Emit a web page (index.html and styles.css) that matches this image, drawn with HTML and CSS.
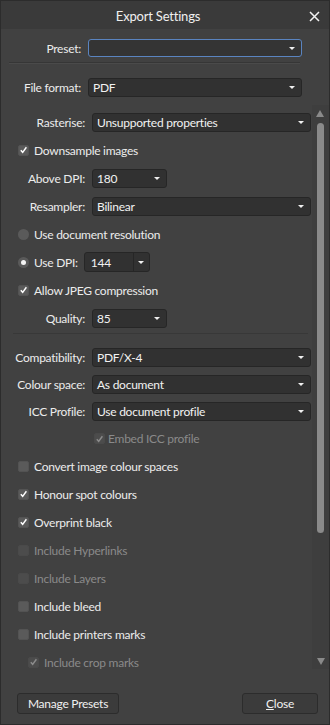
FILE: index.html
```html
<!DOCTYPE html>
<html>
<head>
<meta charset="utf-8">
<link rel="stylesheet" href="styles.css">
</head>
<body>
<div class="window">
  <div class="titlebar">
    <span class="title">Export Settings</span>
    <svg class="close-x" width="11" height="11" viewBox="0 0 11 11"><path d="M1 1L10 10M10 1L1 10" stroke="#f2f2f2" stroke-width="1.5" fill="none"/></svg>
  </div>
  <div class="top">
    <div class="trow preset-row">
      <span class="tlabel">Preset:</span>
      <div class="combo focus"><span class="val"></span><span class="arrow"></span></div>
    </div>
    <div class="tsep"></div>
    <div class="trow format-row">
      <span class="tlabel">File format:</span>
      <div class="combo"><span class="val">PDF</span><span class="arrow"></span></div>
    </div>
  </div>
  <div class="scroll-area">
    <div class="content">
      <div class="row">
        <span class="label">Rasterise:</span>
        <div class="combo wide"><span class="val">Unsupported properties</span><span class="arrow"></span></div>
      </div>
      <div class="row check-row">
        <span class="box checked"><svg width="10" height="10" viewBox="0 0 10 10"><path d="M2 5.2L4.1 7.6L8.2 2" stroke="#fff" stroke-width="1.6" fill="none"/></svg></span>
        <span class="ctext">Downsample images</span>
      </div>
      <div class="row">
        <span class="label">Above DPI:</span>
        <div class="combo small"><span class="val">180</span><span class="arrow"></span></div>
      </div>
      <div class="row">
        <span class="label">Resampler:</span>
        <div class="combo wide"><span class="val">Bilinear</span><span class="arrow"></span></div>
      </div>
      <div class="row check-row">
        <span class="radio"></span>
        <span class="ctext">Use document resolution</span>
      </div>
      <div class="row check-row">
        <span class="radio on"></span>
        <span class="ctext">Use DPI:</span>
        <div class="combo split"><span class="val">144</span><span class="split-btn"><span class="arrow"></span></span></div>
      </div>
      <div class="row check-row">
        <span class="box checked"><svg width="10" height="10" viewBox="0 0 10 10"><path d="M2 5.2L4.1 7.6L8.2 2" stroke="#fff" stroke-width="1.6" fill="none"/></svg></span>
        <span class="ctext">Allow JPEG compression</span>
      </div>
      <div class="row">
        <span class="label">Quality:</span>
        <div class="combo small"><span class="val">85</span><span class="arrow"></span></div>
      </div>
      <div class="sep"></div>
      <div class="row r27">
        <span class="label">Compatibility:</span>
        <div class="combo wide"><span class="val">PDF/X-4</span><span class="arrow"></span></div>
      </div>
      <div class="row r27">
        <span class="label">Colour space:</span>
        <div class="combo wide"><span class="val">As document</span><span class="arrow"></span></div>
      </div>
      <div class="row r27">
        <span class="label">ICC Profile:</span>
        <div class="combo wide"><span class="val">Use document profile</span><span class="arrow"></span></div>
      </div>
      <div class="row r27 check-row embed disabled">
        <span class="box checked"><svg width="10" height="10" viewBox="0 0 10 10"><path d="M2 5.2L4.1 7.6L8.2 2" stroke="#8c8c8c" stroke-width="1.6" fill="none"/></svg></span>
        <span class="ctext">Embed ICC profile</span>
      </div>
      <div class="row check-row">
        <span class="box"></span>
        <span class="ctext">Convert image colour spaces</span>
      </div>
      <div class="row check-row">
        <span class="box checked"><svg width="10" height="10" viewBox="0 0 10 10"><path d="M2 5.2L4.1 7.6L8.2 2" stroke="#fff" stroke-width="1.6" fill="none"/></svg></span>
        <span class="ctext">Honour spot colours</span>
      </div>
      <div class="row check-row">
        <span class="box checked"><svg width="10" height="10" viewBox="0 0 10 10"><path d="M2 5.2L4.1 7.6L8.2 2" stroke="#fff" stroke-width="1.6" fill="none"/></svg></span>
        <span class="ctext">Overprint black</span>
      </div>
      <div class="row check-row disabled">
        <span class="box"></span>
        <span class="ctext">Include Hyperlinks</span>
      </div>
      <div class="row check-row disabled">
        <span class="box"></span>
        <span class="ctext">Include Layers</span>
      </div>
      <div class="row check-row">
        <span class="box"></span>
        <span class="ctext">Include bleed</span>
      </div>
      <div class="row check-row">
        <span class="box"></span>
        <span class="ctext">Include printers marks</span>
      </div>
      <div class="row check-row crop disabled">
        <span class="box checked"><svg width="10" height="10" viewBox="0 0 10 10"><path d="M2 5.2L4.1 7.6L8.2 2" stroke="#8c8c8c" stroke-width="1.6" fill="none"/></svg></span>
        <span class="ctext">Include crop marks</span>
      </div>
    </div>
    <div class="scrollbar">
      <span class="sb-up"></span>
      <span class="sb-thumb"></span>
      <span class="sb-space"></span>
      <span class="sb-down"></span>
    </div>
  </div>
  <div class="footer">
    <button class="btn manage">Manage Presets</button>
    <button class="btn close"><u>C</u>lose</button>
  </div>
</div>
</body>
</html>
```

FILE: styles.css
```css
html, body {
  margin: 0;
  padding: 0;
  background: #414141;
}
body {
  font-family: Lato, "Noto Sans", sans-serif;
  font-size: 12px;
  letter-spacing: -0.25px;
  color: #ececec;
}
.window {
  width: 330px;
  height: 725px;
  box-sizing: border-box;
  border: 1px solid #2c2c2c;
  background: #414141;
  display: flex;
  flex-direction: column;
  overflow: hidden;
}
.titlebar {
  height: 28px;
  flex: none;
  background: #3a3a3a;
  display: flex;
  align-items: center;
  justify-content: center;
  position: relative;
}
.title {
  font-size: 13px;
  letter-spacing: -0.2px;
  color: #f0f0f0;
  margin-left: -14px;
  margin-top: 1px;
}
.close-x {
  position: absolute;
  right: 9px;
  top: 10px;
}
.top {
  flex: none;
  padding-right: 27px;
}
.trow {
  display: flex;
  align-items: center;
}
.preset-row {
  margin-top: 10px;
  height: 18px;
}
.format-row {
  height: 19px;
}
.tlabel {
  width: 80px;
  text-align: right;
  margin-right: 7px;
  flex: none;
}
.trow .combo {
  flex: 1;
  height: 100%;
}
.tsep {
  height: 1px;
  background: #363636;
  border-bottom: 1px solid #4a4a4a;
  margin: 5px 2px 14px 8px;
}
.combo {
  box-sizing: border-box;
  height: 19px;
  background: #313131;
  border: 1px solid #262626;
  border-radius: 3px;
  display: flex;
  align-items: center;
  padding-left: 4px;
  color: #f2f2f2;
}
.combo.focus {
  border-color: #5a84c0;
  background: #343434;
}
.combo .val {
  flex: 1;
  white-space: nowrap;
}
.arrow {
  width: 0;
  height: 0;
  border-left: 3px solid transparent;
  border-right: 3px solid transparent;
  border-top: 3px solid #f0f0f0;
  margin-right: 6px;
  flex: none;
}
.scroll-area {
  margin-top: 8px;
  height: 564px;
  flex: none;
  display: flex;
  overflow: hidden;
}
.content {
  flex: 1;
  padding-top: 3px;
  padding-right: 1px;
  overflow: hidden;
}
.row {
  height: 28px;
  display: flex;
  align-items: center;
  flex: none;
}
.row.r27 {
  height: 27px;
}
.label {
  width: 84px;
  text-align: right;
  margin-right: 7px;
  flex: none;
  white-space: nowrap;
}
.row .combo {
  height: 19px;
}
.combo.wide {
  flex: 1;
}
.combo.small {
  width: 75px;
}
.combo.split {
  width: 66px;
  margin-left: 6px;
  padding-left: 0;
  height: 20px;
}
.combo.split .val {
  padding-left: 6px;
}
.split-btn {
  width: 15px;
  height: 100%;
  border-left: 1px solid #262626;
  display: flex;
  align-items: center;
  justify-content: center;
}
.split-btn .arrow {
  margin-right: 0;
}
.sep {
  height: 1px;
  background: #383838;
  margin: 1px 3px 10px 12px;
}
.check-row {
  padding-left: 17px;
}
.box {
  box-sizing: border-box;
  width: 11px;
  height: 11px;
  border-radius: 2px;
  background: #5a5a5a;
  border: 1px solid #535353;
  display: flex;
  align-items: center;
  justify-content: center;
  flex: none;
  margin-right: 5px;
}
.box svg {
  display: block;
}
.radio {
  box-sizing: border-box;
  width: 11px;
  height: 11px;
  border-radius: 50%;
  background: #5a5a5a;
  flex: none;
  margin-right: 5px;
  display: flex;
  align-items: center;
  justify-content: center;
}
.radio.on::after {
  content: "";
  width: 5px;
  height: 5px;
  border-radius: 50%;
  background: #f4f4f4;
}
.ctext {
  white-space: nowrap;
}
.disabled .ctext {
  color: #8a8a8a;
}
.disabled .box {
  background: #4c4c4c;
  border-color: #4a4a4a;
}
.embed {
  padding-left: 93px;
}
.embed .box {
  margin-right: 3px;
}
.crop {
  padding-left: 27px;
}
.scrollbar {
  width: 17px;
  flex: none;
  background: #3e3e3e;
  display: flex;
  flex-direction: column;
  align-items: center;
  padding-top: 5px;
  padding-bottom: 4px;
  box-sizing: border-box;
}
.sb-up {
  width: 0;
  height: 0;
  border-left: 4px solid transparent;
  border-right: 4px solid transparent;
  border-bottom: 7px solid #8a8a8a;
  flex: none;
  margin-left: -1px;
}
.sb-thumb {
  width: 7px;
  height: 410px;
  margin-top: 6px;
  background: #8a8a8a;
  border-radius: 4px;
  flex: none;
  margin-left: -1px;
}
.sb-space {
  flex: 1;
}
.sb-down {
  width: 0;
  height: 0;
  border-left: 4px solid transparent;
  border-right: 4px solid transparent;
  border-top: 7px solid #8a8a8a;
  flex: none;
}
.footer {
  flex: 1;
  display: flex;
  justify-content: space-between;
  align-items: flex-start;
  padding: 24px 11px 0 16px;
}
.btn {
  font-family: Lato, "Noto Sans", sans-serif;
  font-size: 12px;
  letter-spacing: -0.25px;
  color: #f0f0f0;
  background: #3b3b3b;
  border: 1px solid #2c2c2c;
  border-radius: 3px;
  height: 21px;
  padding: 0;
  line-height: 18px;
}
.btn.manage {
  width: 102px;
}
.btn.close {
  width: 76px;
}
```
